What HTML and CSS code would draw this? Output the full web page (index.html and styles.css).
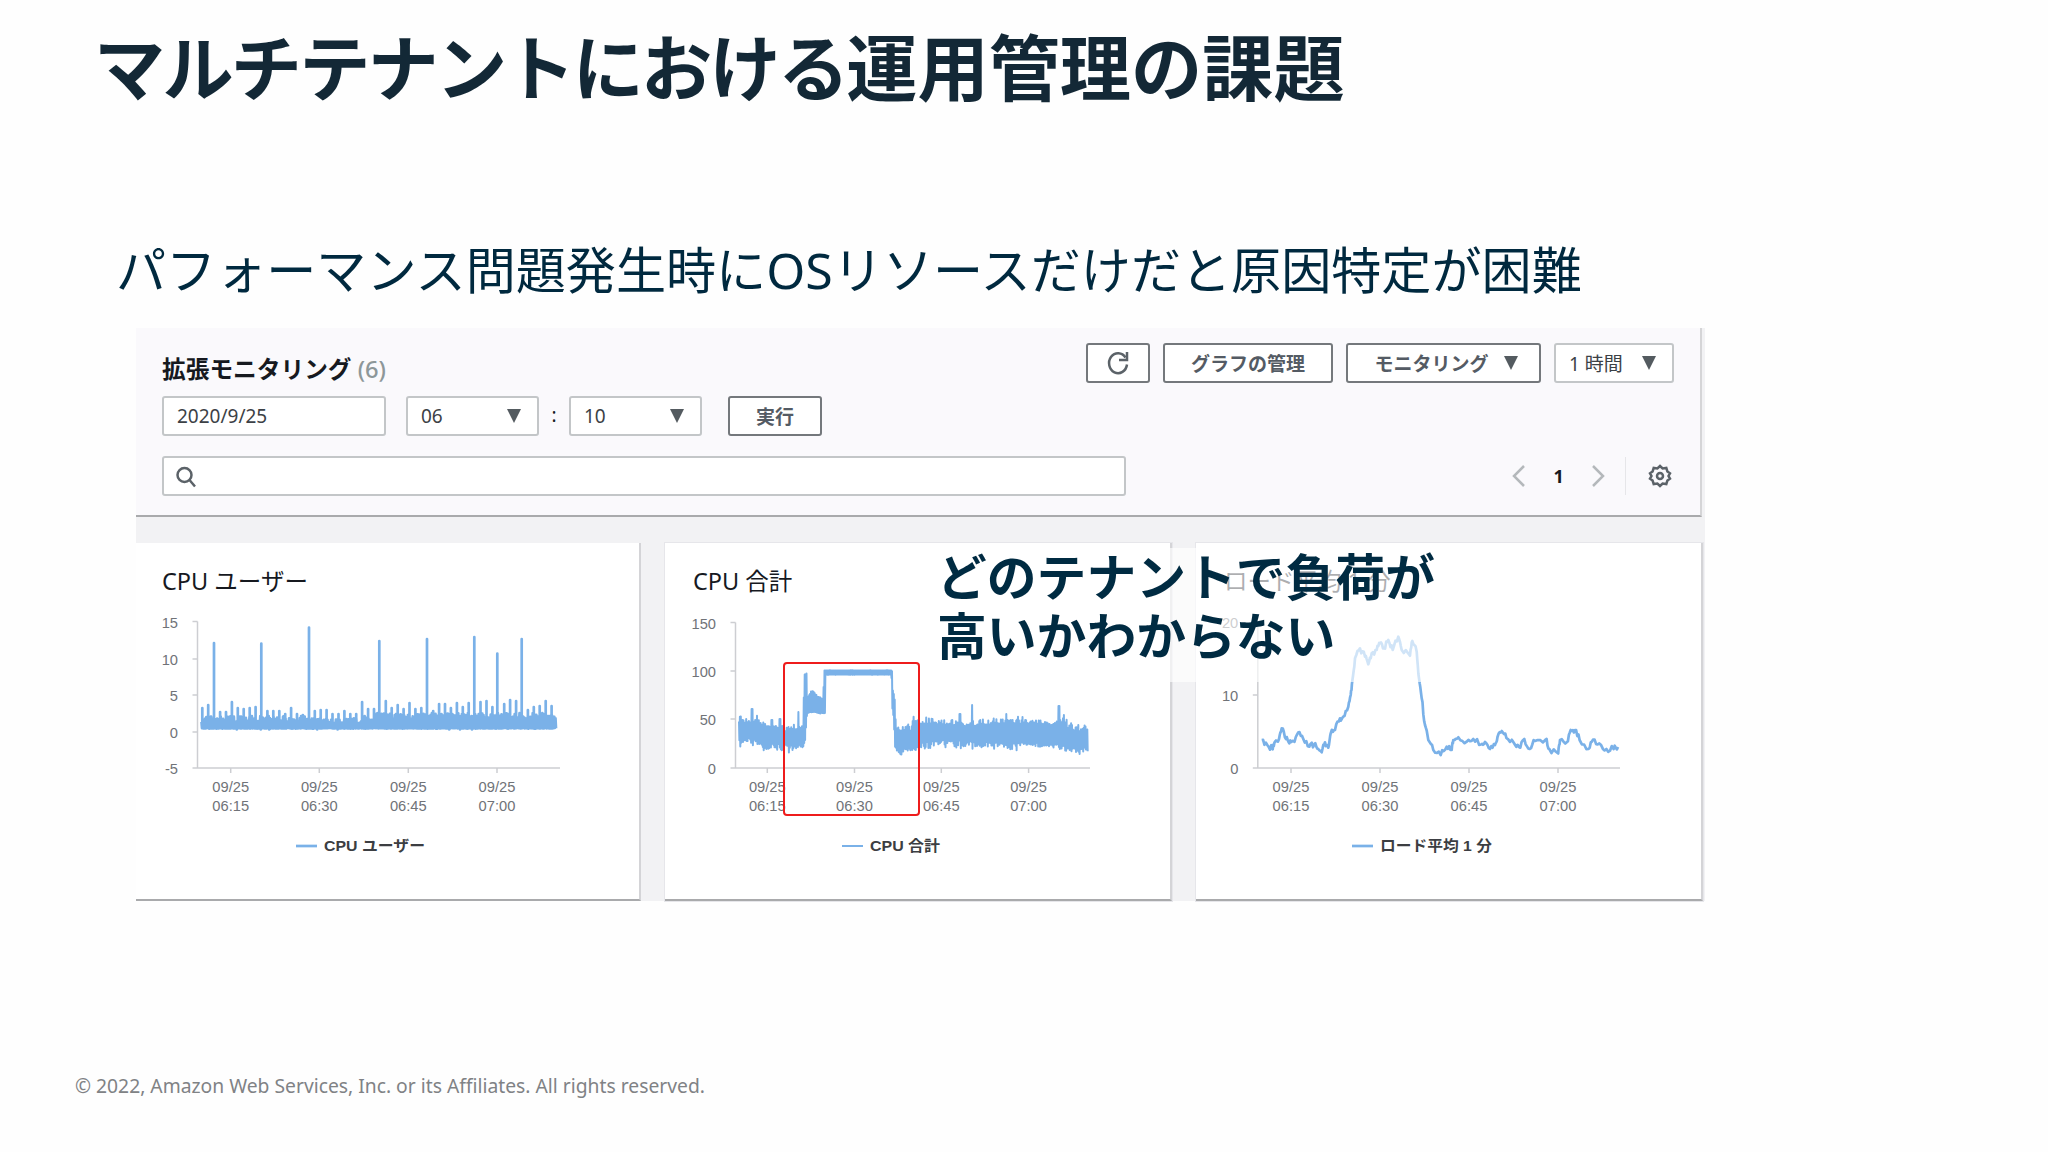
FILE: index.html
```html
<!DOCTYPE html>
<html lang="ja">
  <head>
    <meta charset="UTF-8" />
    <meta name="viewport" content="width=device-width, initial-scale=1.0" />
    <title>マルチテナントにおける運用管理の課題</title>
    <link rel="stylesheet" href="styles.css">
  </head>
  <body>
    <h1><span class="kana">マルチテナントにおける</span>運用管理の課題</h1>
    <h2 class="subtitle">パフォーマンス問題発生時にOSリソースだけだと原因特定が困難</h2>

    <div class="console">
      <!-- Monitoring toolbar -->
      <div class="toolbar">
        <div class="actions">
          <button class="button refresh">
            <svg width="24" height="26" viewBox="0 0 24 26">
              <path d="M19.5 7.5A9 10 0 1 0 21 14.5" />
              <path d="M21 2v8h-8" />
            </svg>
          </button>
          <button class="button manage">グラフの管理</button>
          <button class="button monitoring">モニタリング <span class="arrow"></span></button>
          <div class="select range">1 時間 <span class="arrow"></span></div>
        </div>

        <h3 class="panel-title">拡張モニタリング <span class="count">(6)</span></h3>

        <div class="time-row">
          <div class="date">2020/9/25</div>
          <div class="select">06 <span class="arrow"></span></div>
          <span class="colon">:</span>
          <div class="select">10 <span class="arrow"></span></div>
          <button class="button run">実行</button>
        </div>

        <div class="search-row">
          <div class="search">
            <svg width="22" height="22" viewBox="0 0 22 22">
              <circle cx="8.5" cy="9" r="7" />
              <path d="M13.5 14l5.500 6.500" />
            </svg>
          </div>
          <div class="pager">
            <svg width="14" height="22" viewBox="0 0 14 22"><path d="M12 1L2 11l10 10" /></svg>
            <span class="page">1</span>
            <svg width="14" height="22" viewBox="0 0 14 22"><path d="M2 1l10 10L2 21" /></svg>
          </div>
          <div class="settings">
            <svg width="24" height="24" viewBox="0 0 24 24">
              <path d="M12 2l2.600 2.500 3.700-.6 1.100 3.500 2.600 1.900L20.500 12l1.500 2.700-2.600 1.900-1.100 3.500-3.700-.6L12 22l-2.600-2.500-3.700.6-1.100-3.500L2 14.700 3.500 12 2 9.300l2.600-1.900 1.100-3.500 3.700.6z" />
              <circle cx="12" cy="12" r="3" />
            </svg>
          </div>
        </div>
      </div>

      <!-- Charts -->
      <div class="cards">
        <div class="card first">
          <h4>CPU ユーザー</h4>
          <svg id="cpuUser" class="chart" width="504" height="290"></svg>
        </div>
        <div class="card">
          <h4>CPU 合計</h4>
          <svg id="cpuTotal" class="chart" width="504" height="290"></svg>
        </div>
        <div class="card">
          <h4>ロード平均 1 分</h4>
          <svg id="loadAverage" class="chart" width="504" height="290"></svg>
        </div>
      </div>

      <div class="highlight"></div>
      <div class="callout">どのテナントで負荷が<br>高いかわからない</div>
    </div>

    <footer>© 2022, Amazon Web Services, Inc. or its Affiliates. All rights reserved.</footer>

    <script src="charts.js"></script>
  </body>
</html>
```
FILE: styles.css
```css
body {
  margin: 0;
  width: 2048px;
  height: 1152px;
  overflow: hidden;
  position: relative;
  background-color: #fefefe;
  color: #16191f;
  font-family: "Noto Sans", "Noto Sans CJK JP", sans-serif;
}

h1,
h2,
h3,
h4 {
  margin: 0;
}

h1 {
  height: 140px;
  padding: 20px 0 0 94px;
  line-height: 96px;
  font-size: 71.200px;
  font-weight: bold;
  color: #132836;
  box-sizing: border-box;
}

h1 .kana {
  letter-spacing: -2.800px;
}

.subtitle {
  height: 188px;
  padding: 82px 0 0 116px;
  line-height: 96px;
  font-size: 50.100px;
  font-weight: normal;
  color: #00293f;
  box-sizing: border-box;
}

/* Console panel */
.console {
  position: relative;
  width: 1569px;
  height: 573px;
  margin-left: 136px;
  background-color: #f2f2f4;
}

.toolbar {
  position: relative;
  width: 1566px;
  height: 189px;
  padding: 26px 28px 0 26px;
  box-sizing: border-box;
  background-color: #faf9fc;
  border-right: 2px solid #d5d5d7;
  border-bottom: 2px solid #a9aaac;
}

.panel-title {
  height: 42px;
  line-height: 30px;
  font-size: 23.700px;
  font-weight: bold;
}

.count {
  font-weight: 500;
  color: #8d9799;
}

.actions {
  position: absolute;
  top: 15px;
  right: 26px;
  display: flex;
  gap: 13px;
}

.button,
.select,
.date {
  display: flex;
  align-items: center;
  height: 40px;
  padding: 0 13px;
  box-sizing: border-box;
  background-color: #fff;
  border: 2px solid #c3c6c8;
  border-radius: 3px;
  font-family: inherit;
  font-size: 19px;
  color: #3c4146;
  white-space: nowrap;
}

.button {
  justify-content: center;
  border-color: #74787c;
  font-size: 19px;
  font-weight: bold;
  color: #545b64;
}

.arrow {
  border: 7.500px solid transparent;
  border-top: 14px solid #545b60;
  border-bottom: none;
}

.select {
  width: 133px;
  justify-content: space-between;
  padding-right: 16px;
}

.refresh {
  width: 64px;
  padding: 0;
}

.refresh svg,
.search svg,
.settings svg {
  fill: none;
  stroke: #5b6268;
  stroke-width: 2.500;
}

.manage {
  width: 170px;
}

.monitoring {
  width: 195px;
  gap: 15px;
  padding: 0 0 0 5px;
}

.range {
  width: 120px;
}

.time-row {
  display: flex;
  height: 60px;
}

.date {
  width: 224px;
  margin-right: 20px;
}

.colon {
  width: 30px;
  line-height: 38px;
  font-size: 19px;
  text-align: center;
}

.run {
  width: 94px;
  margin-left: 26px;
}

.search-row {
  display: flex;
  align-items: center;
  height: 40px;
}

.search {
  width: 966px;
  height: 40px;
  padding: 8px 12px;
  box-sizing: border-box;
  background-color: #fff;
  border: 2px solid #c3c6c8;
  border-radius: 3px;
}

.pager {
  display: flex;
  align-items: center;
  justify-content: space-between;
  width: 93px;
  margin-left: 386px;
}

.pager svg {
  fill: none;
  stroke: #b4b8bb;
  stroke-width: 2.500;
}

.page {
  font-size: 18px;
  font-weight: bold;
}

.settings {
  display: flex;
  align-items: center;
  height: 38px;
  margin-left: 20px;
  padding-left: 22px;
  border-left: 1px solid #e6e6e9;
}

/* Chart cards */
.cards {
  display: flex;
  gap: 24px;
  padding-top: 26px;
}

.card {
  width: 507px;
  height: 358px;
  box-sizing: border-box;
  background-color: #fff;
  border-right: 2px solid #d4d4d7;
  border-bottom: 2px solid #a9aaac;
  box-shadow: 0 0 0 1px #e6e6ea;
}

.card.first {
  width: 505px;
  box-shadow: none;
}

.card h4 {
  height: 60px;
  padding-left: 28px;
  line-height: 77px;
  font-size: 23.500px;
  font-weight: normal;
  box-sizing: border-box;
}

.card.first h4 {
  padding-left: 26px;
}

.chart {
  display: block;
}

.chart text {
  font-family: "Liberation Sans", "Noto Sans CJK JP", sans-serif;
  font-size: 14.700px;
  fill: #707378;
}

.chart .legend {
  font-size: 15px;
  font-weight: bold;
  fill: #3c3e42;
}

.axis {
  fill: none;
  stroke: #cdced2;
  stroke-width: 1.500;
}

.series {
  fill: none;
  stroke: #7ab1e8;
  stroke-width: 2.700;
  stroke-linejoin: round;
}

#cpuTotal .series {
  stroke-width: 2;
}

.highlight {
  position: absolute;
  left: 647px;
  top: 334px;
  width: 137px;
  height: 154px;
  box-sizing: border-box;
  border: 2px solid #ee1c1c;
  border-radius: 4px;
}

.callout {
  position: absolute;
  left: 789px;
  top: 220px;
  width: 525px;
  height: 134px;
  padding: 0 12px;
  box-sizing: border-box;
  background-color: rgba(255, 255, 255, 0.65);
  font-size: 49.800px;
  line-height: 59px;
  font-weight: bold;
  color: #002b42;
  white-space: nowrap;
}

footer {
  margin: 171px 0 0 75px;
  font-size: 19.300px;
  line-height: 28px;
  color: #808285;
}
```
FILE: charts.js
```js
const NS = "http://www.w3.org/2000/svg";
let seed = 7;

function rand() {
  seed = (seed * 16807) % 2147483647;
  return seed / 2147483647;
}

function add(svg, name, attrs, text) {
  const el = document.createElementNS(NS, name);
  for (const key in attrs) el.setAttribute(key, attrs[key]);
  if (text) el.textContent = text;
  svg.appendChild(el);
}

function drawChart(id, c) {
  const svg = document.getElementById(id);
  const base = 165;
  const top = c.yTicks[0][1];

  let axis = `M${c.x} ${top}V${base}H${c.end}`;
  c.yTicks.forEach(([label, y]) => {
    axis += `M${c.x - 5} ${y}H${c.x}`;
    add(svg, "text", { x: c.x - 19.5, y: y + 6, "text-anchor": "end" }, label);
  });
  ["06:15", "06:30", "06:45", "07:00"].forEach((time, i) => {
    const x = c.xTicks[i];
    axis += `M${x} ${base}v5`;
    add(svg, "text", { x: x, y: 189, "text-anchor": "middle" }, "09/25");
    add(svg, "text", { x: x, y: 207.5, "text-anchor": "middle" }, time);
  });
  add(svg, "path", { class: "axis", d: axis });
  add(svg, "path", { class: "series", d: "M" + c.points.map((p) => p.map((n) => n.toFixed(1)).join(" ")).join("L") });

  // Legend
  add(svg, "path", { class: "series", d: `M${c.legend[0]} 243h21` });
  add(svg, "text", { class: "legend", x: c.legend[1], y: 248, textLength: c.legend[3], lengthAdjust: "spacingAndGlyphs" }, c.legend[2]);
}

// CPU user: dense band with a small peak every 6px and a few tall ones
const smallPeaks = [
  103, 100, 0, 107, 107, 97, 103, 104, 103, 102, 0, 106, 106, 106, 109, 103, 109, 110, 0, 106,
  105, 105, 109, 109, 106, 109, 109, 97, 104, 104, 0, 96, 103, 100, 104, 98, 104, 103, 0, 106,
  99, 99, 103, 98, 102, 98, 0, 97, 96, 102, 0, 99, 95, 96, 0, 105, 102, 101, 96, 101,
];
const tallPeaks = [[78, 40], [125.3, 40.5], [173, 24.5], [243.3, 38], [291, 36], [338.3, 34], [361.3, 50.5], [385.7, 36]];

const user = [];
for (let x = 65.5; x < 420; x += 1.2) {
  const lift = x > 240 ? 4 : x > 170 && x < 225 ? -1 : 1;
  user.push([x, 120 - lift - rand() * 6]);
  user.push([x + 0.5, 125 + (rand() > 0.95 ? 1.5 : rand() * 0.6)]);
}
smallPeaks.forEach((y, i) => {
  if (y) user.push([66.3 + i * 5.92, 124], [66.3 + i * 5.92, y + 2], [66.3 + i * 5.92, 124]);
});
tallPeaks.forEach(([x, y]) => user.push([x, 124], [x, y], [x, 124]));
// keep the path going left to right
user.sort((a, b) => a[0] - b[0]);

// CPU total: [x, top, bottom] of the band
const envelope = [
  [74, 117, 140], [83, 117, 137], [94, 116, 139], [95, 122, 143], [105, 121, 143], [118, 126, 144], [138, 124, 144],
  [139.5, 71, 140], [141.5, 71, 112], [142, 96, 110], [147, 88, 109], [152, 93, 110], [158, 96, 110],
  [159.5, 67.5, 110], [160, 67.5, 71.5], [226, 67.5, 71.5], [227, 68, 108], [228, 90, 109],
  [229.5, 89, 142], [231, 126, 148], [246, 126, 147], [249, 117, 143], [265, 120, 141], [285, 120, 139],
  [310, 121, 141], [330, 118, 142], [360, 118, 142], [391, 120, 143], [400, 121, 145], [410, 126, 146], [423, 127, 147],
];
const peaks = [[87, 106], [107, 117], [115, 116], [133.5, 109], [295, 111], [307, 102], [341, 111], [394, 103], [399, 112], [413, 122]];

const total = [];
for (let x = 74; x < 423; x += 0.9) {
  const i = envelope.findIndex((e) => e[0] > x);
  const a = envelope[i - 1];
  const b = envelope[i];
  const t = (x - a[0]) / (b[0] - a[0]);
  const noise = x > 159 && x < 227 ? 0.5 : x > 139 && x < 160 ? 2 : 9;
  let hi = a[1] + (b[1] - a[1]) * t + (0.3 - rand() * rand()) * noise;
  const lo = a[2] + (b[2] - a[2]) * t + (rand() * rand() - 0.3) * noise;
  const peak = peaks.find((p) => Math.abs(p[0] - x) < 0.6);
  if (peak) hi = peak[1];
  total.push([x, hi], [x + 0.4, lo]);
}

// Load average
const load = [
  [65.7, 137], [71.3, 142], [76.7, 146.3], [79, 138.7], [83, 136], [85.7, 125.3], [90, 136],
  [93.3, 140.3], [97.3, 138], [102.3, 129.3], [107.3, 136], [113.3, 143.7], [118.3, 141.3],
  [122.3, 146], [125.7, 149.3], [129, 139.3], [132.3, 144.7], [134.7, 130.3], [139, 127],
  [144, 115.3], [147.3, 113.7], [152.3, 103.7], [154.7, 92], [156.3, 78], [159, 55.3], [164, 45.3],
  [169, 53.7], [172.3, 61.3], [175.7, 50.3], [180.7, 47], [184, 40.3], [188, 45.3], [192.3, 37],
  [196.7, 47], [202.3, 33.7], [205.7, 47], [214, 52.7], [216.3, 38], [220.7, 48.7], [223, 75.3],
  [225.7, 95.3], [229, 122], [232.3, 137], [237.3, 147], [244.7, 152], [250.7, 143.7], [255.7, 147],
  [257.3, 137], [262.3, 134.3], [270.7, 138.7], [277.3, 136], [285, 141.5], [289, 139], [294, 146],
  [299, 142], [301.5, 134], [305.8, 128], [310.4, 135], [317.6, 139.5], [323, 144], [328.3, 136],
  [333.6, 146], [339, 138], [349.7, 136.5], [353.3, 146], [362.2, 150.5], [364, 137], [371, 139],
  [374.7, 127], [379, 127], [383.6, 137], [392.6, 146], [397, 136.5], [403.3, 140.5], [410.4, 146],
  [417.6, 146], [422, 144],
];
const loadPoints = [];
load.forEach((p, i) => {
  loadPoints.push(p);
  const next = load[i + 1];
  if (!next) return;
  for (let k = 1; k < 4; k++) {
    loadPoints.push([
      p[0] + ((next[0] - p[0]) * k) / 4,
      p[1] + ((next[1] - p[1]) * k) / 4 + (rand() - 0.5) * 6,
    ]);
  }
});

drawChart("cpuUser", {
  x: 61.5,
  end: 424,
  yTicks: [["15", 18.5], ["10", 56], ["5", 92], ["0", 129], ["-5", 165]],
  xTicks: [94.7, 183.3, 272.3, 361],
  legend: [160, 188, "CPU ユーザー", 101],
  points: user,
});
drawChart("cpuTotal", {
  x: 70.5,
  end: 425,
  yTicks: [["150", 19.5], ["100", 68], ["50", 116], ["0", 165]],
  xTicks: [102.3, 189.5, 276.3, 363.6],
  legend: [177, 205, "CPU 合計", 70],
  points: total,
});
drawChart("loadAverage", {
  x: 61.8,
  end: 424,
  yTicks: [["20", 19], ["10", 92], ["0", 165]],
  xTicks: [95, 184, 273, 362],
  legend: [156, 184, "ロード平均 1 分", 112],
  points: loadPoints,
});
```
